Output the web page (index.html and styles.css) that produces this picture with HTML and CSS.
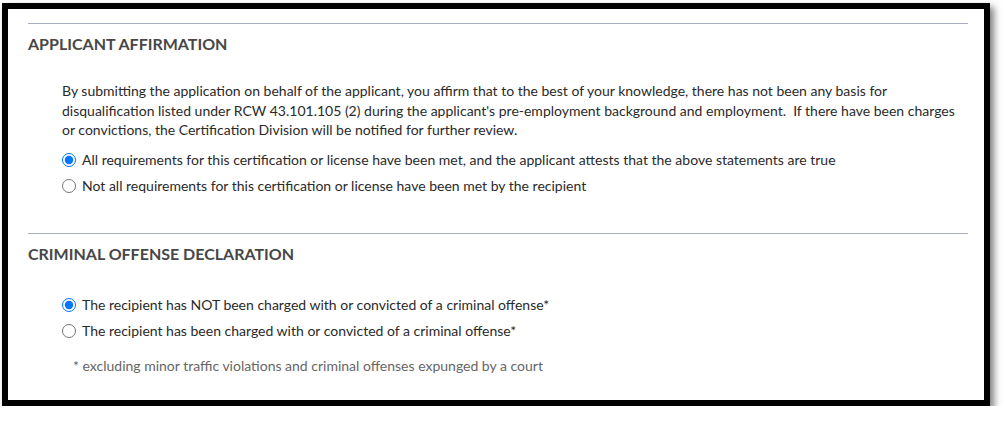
FILE: index.html
```html
<!DOCTYPE html>
<html lang="en">
<head>
<meta charset="utf-8">
<title>Applicant Affirmation</title>
<link rel="stylesheet" href="styles.css">
</head>
<body>
<div class="frame">
  <section class="sec sec-aff">
    <h2 class="sec-title">APPLICANT AFFIRMATION</h2>
    <div class="sec-body">
      <p class="statement">By submitting the application on behalf of the applicant, you affirm that to the best of your knowledge, there has not been any basis for disqualification listed under RCW 43.101.105 (2) during the applicant's pre-employment background and employment.&nbsp; If there have been charges or convictions, the Certification Division will be notified for further review.</p>
      <div class="options">
        <label class="opt"><input type="radio" name="affirm" checked><span>All requirements for this certification or license have been met, and the applicant attests that the above statements are true</span></label>
        <label class="opt"><input type="radio" name="affirm"><span>Not all requirements for this certification or license have been met by the recipient</span></label>
      </div>
    </div>
  </section>
  <section class="sec sec-crim">
    <h2 class="sec-title">CRIMINAL OFFENSE DECLARATION</h2>
    <div class="sec-body">
      <div class="options options-crim">
        <label class="opt"><input type="radio" name="crim" checked><span>The recipient has NOT been charged with or convicted of a criminal offense*</span></label>
        <label class="opt"><input type="radio" name="crim"><span>The recipient has been charged with or convicted of a criminal offense*</span></label>
      </div>
      <p class="footnote">* excluding minor traffic violations and criminal offenses expunged by a court</p>
    </div>
  </section>
</div>
</body>
</html>
```
FILE: styles.css
```css
html, body {
  margin: 0;
  padding: 0;
  background: #ffffff;
}

body {
  font-family: "Lato", "Liberation Sans", sans-serif;
  font-size: 14px;
  color: #2a2a2a;
  padding: 3px 0 0 2px;
}

.frame {
  box-sizing: border-box;
  width: 988px;
  border: 6px solid #000000;
  background: #ffffff;
  box-shadow: 4px 4px 7px rgba(0, 0, 0, 0.5);
  padding: 14px 16px 24px 20px;
}

.sec {
  border-top: 1px solid #a9aebf;
}

.sec-aff {
  padding-bottom: 37px;
}

.sec-title {
  margin: 10px 0 0 0;
  font-size: 16px;
  line-height: 19px;
  font-weight: 700;
  color: #474747;
  letter-spacing: 0;
}

.sec-body {
  padding-left: 34px;
}

.statement {
  margin: 28px 0 0 0;
  line-height: 19.6px;
}

.options {
  display: flex;
  flex-direction: column;
  gap: 6px;
  margin-top: 10px;
}

.options-crim {
  margin-top: 32px;
}

.opt {
  display: flex;
  align-items: center;
  line-height: 20px;
  cursor: pointer;
}

.opt input {
  width: 14px;
  height: 14px;
  margin: 0 6px 0 0;
  flex: none;
}

.footnote {
  margin: 15px 0 0 11px;
  line-height: 20px;
  color: #666666;
}
```
